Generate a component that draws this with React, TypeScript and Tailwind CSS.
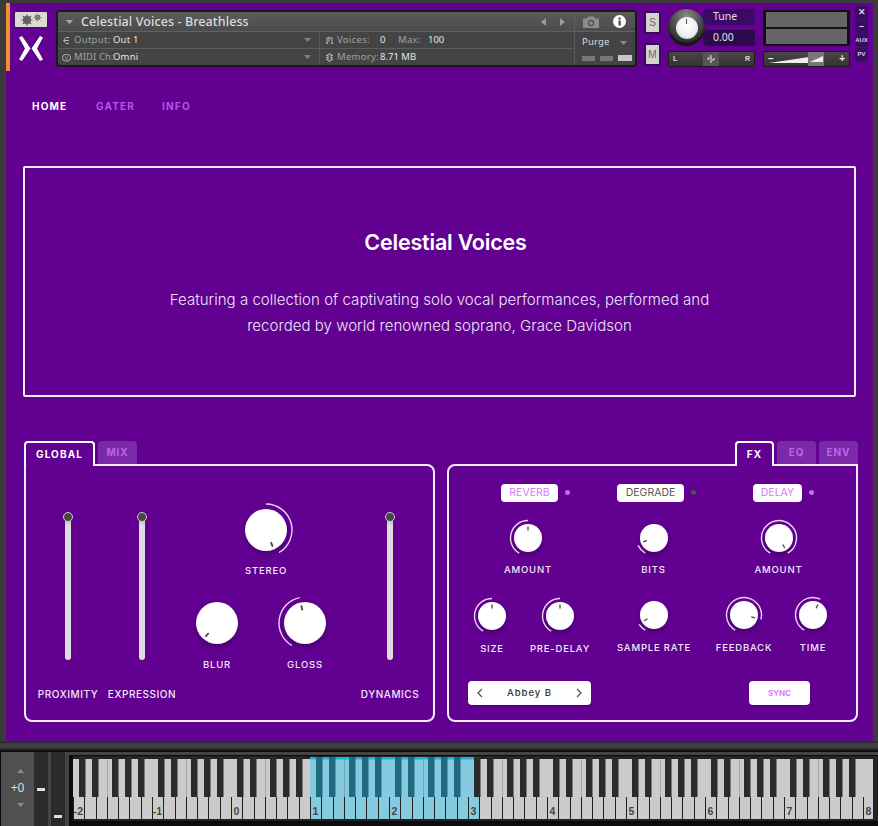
import React from "react";

const pt = (cx: number, cy: number, r: number, deg: number) => {
  const a = ((deg - 90) * Math.PI) / 180;
  return [cx + r * Math.cos(a), cy + r * Math.sin(a)];
};

function Knob({ d, tick, arc, arcR }: { d: number; tick: number; arc?: [number, number]; arcR?: number }) {
  const box = d + 16;
  const c = box / 2;
  const r = arcR ?? d / 2 + 3.5;
  const [x1, y1] = pt(c, c, d / 2 - (d > 35 ? 8 : 6.5), tick);
  const [x2, y2] = pt(c, c, d / 2 - (d > 35 ? 3 : 2.5), tick);
  let path = "";
  if (arc) {
    const [ax, ay] = pt(c, c, r, arc[0]);
    const [bx, by] = pt(c, c, r, arc[1]);
    path = `M${ax} ${ay}A${r} ${r} 0 ${arc[1] - arc[0] > 180 ? 1 : 0} 1 ${bx} ${by}`;
  }
  return (
    <div className="relative" style={{ width: d, height: d }}>
      <div className="h-full w-full rounded-full bg-[radial-gradient(circle_at_50%_42%,#ffffff_0%,#ffffff_66%,#ececec_82%,#bdbdbd_100%)] shadow-[0_3px_5px_rgba(40,0,60,0.45)]" />
      <svg className="absolute -left-2 -top-2" width={box} height={box}>
        {arc && <path d={path} fill="none" stroke="#e6d6ee" strokeWidth="1.4" />}
        <line x1={x1} y1={y1} x2={x2} y2={y2} stroke="#444" strokeWidth={d > 35 ? 1.8 : 1.3} />
      </svg>
    </div>
  );
}

const labelCls = "font-['Inter',sans-serif] text-[9.5px] font-medium tracking-[0.8px] text-[#f3e9f8] leading-3 whitespace-nowrap";

function KnobCell({ w, d, tick, arc, label, gap, arcR }: { w: number; d: number; tick: number; arc?: [number, number]; label: string; gap: number; arcR?: number }) {
  return (
    <div className="flex flex-col items-center" style={{ width: w }}>
      <Knob d={d} tick={tick} arc={arc} arcR={arcR} />
      <div className={labelCls} style={{ marginTop: gap }}>{label}</div>
    </div>
  );
}

function Slider({ label, w }: { label: string; w: number }) {
  return (
    <div className="flex flex-col items-center" style={{ width: w }}>
      <div className="relative h-[143px] w-[6px] rounded-b-[3px] bg-[linear-gradient(#bdb8c0_0px,#dedede_10px,#dedede_100%)]">
        <div className="absolute -left-[2px] -top-[5px] h-[10px] w-[10px] rounded-full border border-[#cfc6d4] bg-[#424a42]" />
      </div>
      <div className="mt-[28px] whitespace-nowrap font-['Inter',sans-serif] text-[10px] font-medium leading-3 tracking-[0.55px] text-[#f3e9f8]">{label}</div>
    </div>
  );
}

function Toggle({ label, on, ml, w }: { label: string; on: boolean; ml: number; w: number }) {
  return (
    <div className="flex items-center" style={{ marginLeft: ml }}>
      <div className={"flex h-[18px] items-center justify-center rounded-[4px] bg-white font-['Inter',sans-serif] text-[10.5px] " + (on ? "text-[#d77bff]" : "text-[#555]")} style={{ width: w }}>{label}</div>
      <div className={"ml-[7px] h-[5px] w-[5px] -translate-y-px rounded-full " + (on ? "bg-[#c56bf0]" : "bg-[#50505a]")} />
    </div>
  );
}

function Tab({ label, active, w }: { label: string; active?: boolean; w: number }) {
  return active ? (
    <div className="relative z-10 -mb-[2px] flex h-[25px] items-center justify-center rounded-t-[4px] border-2 border-b-0 border-white bg-[#620092] font-['Inter',sans-serif] text-[10px] font-bold tracking-[1.1px] text-white" style={{ width: w }}>{label}</div>
  ) : (
    <div className="flex h-[23px] items-center justify-center rounded-t-[4px] bg-[#7a2aa6] font-['Inter',sans-serif] text-[10px] font-bold tracking-[0.9px] text-[#bf62ee]" style={{ width: w }}>{label}</div>
  );
}

function Tri({ up, className }: { up?: boolean; className?: string }) {
  return (
    <svg width="7" height="4" viewBox="0 0 7 4" className={className}>
      <path d={up ? "M0 4L3.5 0L7 4Z" : "M0 0L7 0L3.5 4Z"} fill="currentColor" />
    </svg>
  );
}

function Keyboard() {
  const o = 79;
  const white = o / 7;
  const whites = Array.from({ length: 71 }, (_, i) => i);
  const blackOff = [6, 19, 39, 52, 65];
  const blacks: number[] = [];
  for (let oc = 0; oc < 10; oc++) for (const b of blackOff) blacks.push(oc * o + b);
  const bS = 237;
  const bE = 406;
  const labels = ["-2", "-1", "0", "1", "2", "3", "4", "5", "6", "7", "8"];
  return (
    <svg width="805" height="65" viewBox="0 0 805 65" className="block">
      <rect x="0" y="0" width="805" height="65" fill="#232323" />
      <rect x="0" y="3" width="800" height="60" fill="#cbcbcb" />
      <rect x={bS} y="3" width={bE - bS} height="60" fill="#86cadf" />
      <rect x={bS} y="1" width="164" height="2.5" fill="#12b6e6" />
      {whites.map((i) => {
        const x = Math.round(i * white);
        return <line key={i} x1={x + 0.5} x2={x + 0.5} y1="41" y2="63" stroke="#202020" strokeWidth="1" />;
      })}
      {whites.filter((i) => i % 7 === 3).map((i) => {
        const x = Math.round(i * white);
        return <line key={i} x1={x + 0.5} x2={x + 0.5} y1="3" y2="41" stroke="#000" strokeOpacity="0.18" strokeWidth="1" />;
      })}
      {blacks.map((x) => {
        const on = x > bS && x < bE - 6;
        return <rect key={x} x={x} y="1" width="6.5" height="40" fill={on ? "#1f6a80" : "#2b2b2b"} />;
      })}
      {labels.map((l, i) => (
        <text key={l} x={i * o + 5.5} y="59" textAnchor="middle" fontFamily="'Liberation Sans',sans-serif" fontWeight="700" fontSize="10.5" fill="#444">{l}</text>
      ))}
    </svg>
  );
}

function HeaderIcon({ kind }: { kind: "out" | "midi" | "voices" | "mem" }) {
  return (
    <svg width="9" height="9" viewBox="0 0 9 9" fill="none" stroke="#b5b5b5" strokeWidth="1" className="shrink-0">
      {kind === "out" && <path d="M7 1.5H4L1.5 4.5L4 7.5H7M2 4.5H7" />}
      {kind === "midi" && <g><rect x="0.5" y="1.5" width="8" height="6.5" rx="3" /><path d="M3 4h.8M5.2 4H6M3.5 6h2" /></g>}
      {kind === "voices" && <path d="M2 8V2L4 1V6M4 3L7 1.5V8M1 7h2M6 7.5h2" />}
      {kind === "mem" && <path d="M3 1h3v7H3zM1 2.5h2M1 4.5h2M1 6.5h2M6 2.5h2M6 4.5h2M6 6.5h2" />}
    </svg>
  );
}

function Side({ label, big }: { label: string; big?: boolean }) {
  return (
    <div className={"flex h-[13px] w-[13px] items-center justify-center rounded-[1px] bg-[#3a0a66] font-['Liberation_Sans',sans-serif] font-bold text-[#d8d0de] " + (big ? "text-[9px]" : "text-[6px]")}>{label}</div>
  );
}

export default function App() {
  const kt = "font-['Noto_Sans',sans-serif]";
  return (
    <div className="flex h-[826px] w-[878px] flex-col overflow-hidden bg-[#1c1c1c]">
      <div className="h-[741px] shrink-0 border-l-[6px] border-r-[5px] border-t-[3px] border-[#3b3b3b] bg-[#620092]">
        {/* Kontakt header */}
        <div className="flex h-[68px] items-start">
          <div className="h-[68px] w-[4px] bg-[#f28c38]" />
          <div className="ml-[3px] flex w-[35px] flex-col items-center pt-[8px]">
            <div className="flex h-[17px] w-[34px] items-center justify-center rounded-[2px] border border-[#3a1a50] bg-[#dcdad2]">
              <svg width="24" height="13" viewBox="0 0 24 13" fill="none" stroke="#5c5c5c">
                <circle cx="8" cy="7" r="3" strokeWidth="2" /><path d="M8 1.5v11M2.500 7h11M4 3l8 8M12 3l-8 8" strokeWidth="1.200" />
                <circle cx="18.500" cy="4.500" r="2" strokeWidth="1.400" stroke="#777" /><path d="M18.500 .500v8M14.500 4.500h8M15.700 1.700l5.600 5.600M21.300 1.700l-5.600 5.600" strokeWidth="0.900" stroke="#777" />
              </svg>
            </div>
            <svg width="24" height="25" viewBox="0 0 24 25" className="mt-[8px]" fill="#fff">
              <path d="M0 1.500L3 0L11.500 12.500L3 25L0 23.500L6 12.500Z" /><path d="M24 1.500L21 0L12.500 12.500L21 25L24 23.500L18 12.500Z" />
            </svg>
          </div>
          <div className="ml-[8px] mt-[7px] flex h-[57px] w-[581px] flex-col overflow-hidden rounded-[4px] border-2 border-[#1a1a1a] bg-[#444] text-[#e4e4e4]">
            <div className={"flex h-[20px] shrink-0 items-center border-b border-[#626262] bg-[linear-gradient(#5a5a5a,#4c4c4c)] " + kt}>
              <Tri className="ml-[8px] text-[#a8a8a8]" />
              <div className="ml-[8px] pt-px text-[12.5px] font-medium leading-4 tracking-[0.1px] text-[#dcdcdc]">Celestial Voices - Breathless</div>
              <div className="ml-auto flex items-center text-[#9a9a9a]">
                <svg width="5" height="8" viewBox="0 0 5 8" className="mr-[14px]"><path d="M5 0V8L0 4Z" fill="currentColor" /></svg>
                <svg width="5" height="8" viewBox="0 0 5 8" className="mr-[9px]"><path d="M0 0V8L5 4Z" fill="currentColor" /></svg>
              </div>
              <div className="flex h-full w-[61px] items-center border-l border-[#626262] pl-[8px]">
                <svg width="16" height="12" viewBox="0 0 16 12"><path fill="#8c8c8c" d="M0 2.500h4L5 0.500h6L12 2.500h4V12H0Z" /><circle cx="8" cy="7" r="2.500" fill="none" stroke="#4f4f4f" strokeWidth="1.300" /></svg>
                <svg width="13" height="13" viewBox="0 0 13 13" className="ml-[14px]"><circle cx="6.500" cy="6.500" r="6.500" fill="#fff" /><rect x="5.500" y="5.500" width="2.200" height="5" fill="#444" /><rect x="5.500" y="2.500" width="2.200" height="2" fill="#444" /></svg>
              </div>
            </div>
            <div className="flex flex-1">
              <div className={"flex w-[262px] flex-col border-r border-[#5c5c5c] text-[9.5px] leading-3 " + kt}>
                <div className="flex h-[17px] items-center border-b border-[#5c5c5c] pl-[4px] pr-[8px]">
                  <HeaderIcon kind="out" />
                  <span className="ml-[3px] w-[39px] whitespace-nowrap tracking-[0.3px] text-[#a0a0a0]">Output:</span>
                  <span className="tracking-[0.2px] text-[#e6e6e6]">Out 1</span>
                  <Tri className="ml-auto text-[#808080]" />
                </div>
                <div className="flex flex-1 items-center pl-[4px] pr-[8px]">
                  <HeaderIcon kind="midi" />
                  <span className="ml-[3px] w-[39px] whitespace-nowrap tracking-[0.1px] text-[#a0a0a0]">MIDI Ch:</span>
                  <span className="tracking-[0.2px] text-[#e6e6e6]">Omni</span>
                  <Tri className="ml-auto text-[#808080]" />
                </div>
              </div>
              <div className={"flex w-[254px] flex-col text-[9.5px] leading-3 " + kt}>
                <div className="flex h-[17px] items-center border-b border-[#5c5c5c] pl-[5px]">
                  <HeaderIcon kind="voices" />
                  <span className="ml-[3px] w-[43px] whitespace-nowrap tracking-[0.3px] text-[#a0a0a0]">Voices:</span>
                  <span className="w-[18px] text-[#e6e6e6]">0</span>
                  <span className="w-[30px] tracking-[0.3px] text-[#a0a0a0]">Max:</span>
                  <span className="text-[#e6e6e6]">100</span>
                </div>
                <div className="flex flex-1 items-center pl-[5px]">
                  <HeaderIcon kind="mem" />
                  <span className="ml-[3px] w-[43px] whitespace-nowrap tracking-[0.3px] text-[#a0a0a0]">Memory:</span>
                  <span className="text-[#e6e6e6]">8.71 MB</span>
                </div>
              </div>
              <div className={"-mt-px flex flex-1 flex-col border-l border-[#5c5c5c] pl-[7px] " + kt}>
                <div className="flex h-[18px] items-center pt-[5px] text-[9.5px] tracking-[0.2px] text-[#dcdcdc]">Purge<Tri className="ml-[10px] text-[#8a8a8a]" /></div>
                <div className="mt-[6px] flex items-center gap-[5px]">
                  <div className="h-[5px] w-[13px] bg-[#777]" />
                  <div className="h-[5px] w-[13px] bg-[#777]" />
                  <div className="h-[6px] w-[14px] bg-[#c8c8c8]" />
                </div>
              </div>
            </div>
          </div>
          <div className="ml-[7px] mt-[8px] flex flex-col gap-[9px]">
            {["S", "M"].map((s) => (
              <div key={s} className="flex h-[23px] w-[17px] items-center justify-center rounded-[1px] border-2 border-[#3a0a66] bg-[#d4d2cc] font-['Liberation_Sans',sans-serif] text-[10px] text-[#666]">{s}</div>
            ))}
          </div>
          <div className="ml-[7px] mt-[6px] flex w-[87px] flex-col">
            <div className="flex h-[37px]">
              <div className="flex h-[37px] w-[37px] items-center justify-center rounded-full bg-[radial-gradient(circle_at_50%_20%,#8a8a8a_0%,#4a4a4a_45%,#1e1e1e_100%)] shadow-[inset_0_-3px_3px_#111]">
                <div className="relative h-[22px] w-[22px] rounded-full bg-[radial-gradient(circle_at_50%_40%,#fff_0%,#eee_60%,#aaa_100%)]">
                  <div className="absolute left-[10px] top-[2px] h-[5px] w-[1.500px] bg-[#444]" />
                </div>
              </div>
              <div className={"ml-[-2px] flex flex-1 flex-col gap-[5px] text-[10.5px] text-[#e0e0e0] " + kt}>
                <div className="flex h-[16px] items-center rounded-r-[2px] rounded-l-[5px] bg-[#3a0a66] pl-[10px]">Tune</div>
                <div className="flex h-[16px] items-center rounded-r-[2px] rounded-l-[5px] bg-[#2d0a50] pl-[10px]">0.00</div>
              </div>
            </div>
            <div className="mt-[5px] flex h-[16px] items-center justify-between rounded-[2px] border border-[#1a1a1a] bg-[linear-gradient(#474747,#333)] font-['Liberation_Sans',sans-serif] text-[7px] font-bold text-[#ddd]">
              <span className="ml-[4px]">L</span>
              <div className="flex h-full w-[16px] items-center justify-center bg-[#555]">
                <svg width="10" height="8" viewBox="0 0 10 8" stroke="#eee" fill="none"><path d="M5 0V8M1 4H3V2M9 4H7V6" /></svg>
              </div>
              <span className="mr-[4px]">R</span>
            </div>
          </div>
          <div className="ml-[8px] mt-[7px] flex w-[87px] flex-col">
            <div className="flex h-[36px] flex-col gap-[2px] rounded-[2px] border-2 border-[#111] bg-[#111] px-[1px]">
              <div className="flex-1 bg-[repeating-linear-gradient(90deg,#5e5e5e_0px,#6c6c6c_1px,#606060_2px)]" />
              <div className="flex-1 bg-[repeating-linear-gradient(90deg,#5e5e5e_0px,#6c6c6c_1px,#606060_2px)]" />
            </div>
            <div className="relative mt-[5px] flex h-[16px] items-center justify-between rounded-[2px] border border-[#1a1a1a] bg-[linear-gradient(#474747,#333)] px-[4px] font-['Liberation_Sans',sans-serif] text-[10px] font-bold text-[#eee]">
              <span className="leading-none">–</span>
              <svg width="46" height="14" viewBox="0 0 46 14" className="absolute left-[3px] top-0"><path d="M2 11L42 5V11Z" fill="#eee" /></svg>
              <div className="absolute left-[44px] top-0 h-[14px] w-[16px] bg-[#777]" />
              <svg width="13" height="6" viewBox="0 0 13 6" className="absolute left-[46px] top-[4px]"><path d="M0 6L13 0V6Z" fill="#eee" /></svg>
              <span className="leading-none">+</span>
            </div>
          </div>
          <div className="ml-[5px] mt-[3px] flex flex-col gap-px">
            <Side label="✕" big />
            <Side label="–" big />
            <Side label="AUX" />
            <Side label="PV" />
          </div>
        </div>

        {/* Nav */}
        <div className="ml-[26px] mt-[29px] flex h-[12px] items-center font-['Inter',sans-serif] text-[10px] font-bold tracking-[1.2px]">
          <span className="w-[64px] text-white">HOME</span>
          <span className="w-[66px] text-[#b654ea]">GATER</span>
          <span className="text-[#b654ea]">INFO</span>
        </div>

        {/* Hero */}
        <div className="ml-[17px] mt-[54px] flex h-[231px] w-[833px] flex-col items-center rounded-[2px] border-2 border-[#f6effa] pt-[60px] font-['Inter',sans-serif]">
          <div className="ml-[12px] text-[21.5px] font-semibold leading-7 tracking-[-0.2px] text-white">Celestial Voices</div>
          <div className="mt-[31px] w-[620px] text-center text-[15px] font-light leading-[26px] tracking-[0.04px] text-[#eee4f4]">
            Featuring a collection of captivating solo vocal performances, performed and<br />recorded by world renowned soprano, Grace Davidson
          </div>
        </div>

        {/* Panels */}
        <div className="ml-[18px] mt-[44px] flex">
          <div className="flex w-[411px] flex-col">
            <div className="flex gap-[3px]"><Tab label="GLOBAL" active w={71} /><Tab label="MIX" w={39} /></div>
            <div className="flex h-[258px] rounded-[8px] rounded-tl-none border-2 border-[#f6effa] pl-[5px] pt-[51px]">
              <Slider label="PROXIMITY" w={74} />
              <Slider label="EXPRESSION" w={74} />
              <div className="flex w-[174px] flex-col">
                <div className="-mt-[8px] flex justify-center">
                  <KnobCell w={174} d={42} tick={158} arc={[0, 150]} arcR={26} label="STEREO" gap={14} />
                </div>
                <div className="mt-[25px] flex gap-[12px]">
                  <KnobCell w={76} d={42} tick={-140} label="BLUR" gap={15} />
                  <KnobCell w={76} d={42} tick={-12} arc={[-150, -12]} arcR={26} label="GLOSS" gap={15} />
                </div>
              </div>
              <Slider label="DYNAMICS" w={74} />
            </div>
          </div>
          <div className="ml-[12px] flex w-[411px] flex-col">
            <div className="flex justify-end gap-[3px]"><Tab label="FX" active w={39} /><Tab label="EQ" w={39} /><Tab label="ENV" w={39} /></div>
            <div className="flex h-[258px] flex-col rounded-[8px] rounded-tr-none border-2 border-[#f6effa] pt-[18px]">
              <div className="flex h-[18px]">
                <Toggle label="REVERB" on ml={52} w={57} />
                <Toggle label="DEGRADE" on={false} ml={47} w={67} />
                <Toggle label="DELAY" on ml={57} w={49} />
              </div>
              <div className="ml-[16px] mt-[22px] flex">
                <KnobCell w={126} d={28} tick={0} arc={[-150, 0]} label="AMOUNT" gap={12} />
                <KnobCell w={125} d={28} tick={-110} arc={[-150, -115]} label="BITS" gap={12} />
                <KnobCell w={125} d={28} tick={150} arc={[-150, 150]} label="AMOUNT" gap={12} />
              </div>
              <div className="ml-[9px] mt-[26px] flex">
                <KnobCell w={68} d={28} tick={0} arc={[-150, 0]} label="SIZE" gap={13} />
                <KnobCell w={68} d={28} tick={0} arc={[-150, 0]} label="PRE-DELAY" gap={13} />
                <div className="-mt-px"><KnobCell w={120} d={28} tick={-120} arc={[-150, -122]} label="SAMPLE RATE" gap={13} /></div>
                <div className="-mt-px"><KnobCell w={60} d={28} tick={105} arc={[-150, 105]} label="FEEDBACK" gap={13} /></div>
                <div className="-mt-px"><KnobCell w={78} d={28} tick={25} arc={[-150, 25]} label="TIME" gap={13} /></div>
              </div>
              <div className="ml-[19px] mt-[26px] flex">
                <div className="flex h-[24px] w-[123px] items-center justify-between rounded-[4px] bg-white px-[9px] shadow-[0_1px_1px_rgba(0,0,0,0.3)]">
                  <svg width="6" height="10" viewBox="0 0 6 10" fill="none" stroke="#555" strokeWidth="1.300"><path d="M5 1L1 5L5 9" /></svg>
                  <span className="font-['Inter',sans-serif] text-[9.5px] font-medium tracking-[1px] text-[#333]">Abbey B</span>
                  <svg width="6" height="10" viewBox="0 0 6 10" fill="none" stroke="#555" strokeWidth="1.300"><path d="M1 1L5 5L1 9" /></svg>
                </div>
                <div className="ml-[158px] flex h-[24px] w-[61px] items-center justify-center rounded-[4px] bg-white font-['Inter',sans-serif] text-[8px] font-bold text-[#d77bff] shadow-[0_1px_1px_rgba(0,0,0,0.3)]">SYNC</div>
              </div>
            </div>
          </div>
        </div>
      </div>

      {/* Frame under the instrument */}
      <div className="h-[9px] shrink-0 border-y-2 border-[#2c2c2c] bg-[#3e3e3e]" />

      {/* Keyboard strip */}
      <div className="flex flex-1 items-stretch overflow-hidden bg-[#0c0c0c] pt-[2px]">
        <div className="ml-px flex w-[33px] flex-col items-center justify-center pb-[2px] bg-[#505050] font-['Noto_Sans',sans-serif] text-[12px] leading-[14px] text-[#ddd]">
          <Tri up className="ml-[5px] text-[#8c8c8c]" />
          <span className="my-[8px]">+0</span>
          <Tri className="ml-[5px] text-[#8c8c8c]" />
        </div>
        <div className="flex w-[14px] items-center justify-center bg-[#2b2b2b]"><div className="h-[3px] w-[8px] bg-[#ddd]" /></div>
        <div className="w-[3px] bg-[#444]" />
        <div className="flex w-[14px] items-end justify-center bg-[#2b2b2b] pb-[8px]"><div className="h-[3px] w-[8px] bg-[#ddd]" /></div>
        <div className="flex flex-1 flex-col border-l-[4px] border-t-[3px] border-[#444] pt-px">
          <div className="ml-[4px]"><Keyboard /></div>
        </div>
      </div>
    </div>
  );
}
